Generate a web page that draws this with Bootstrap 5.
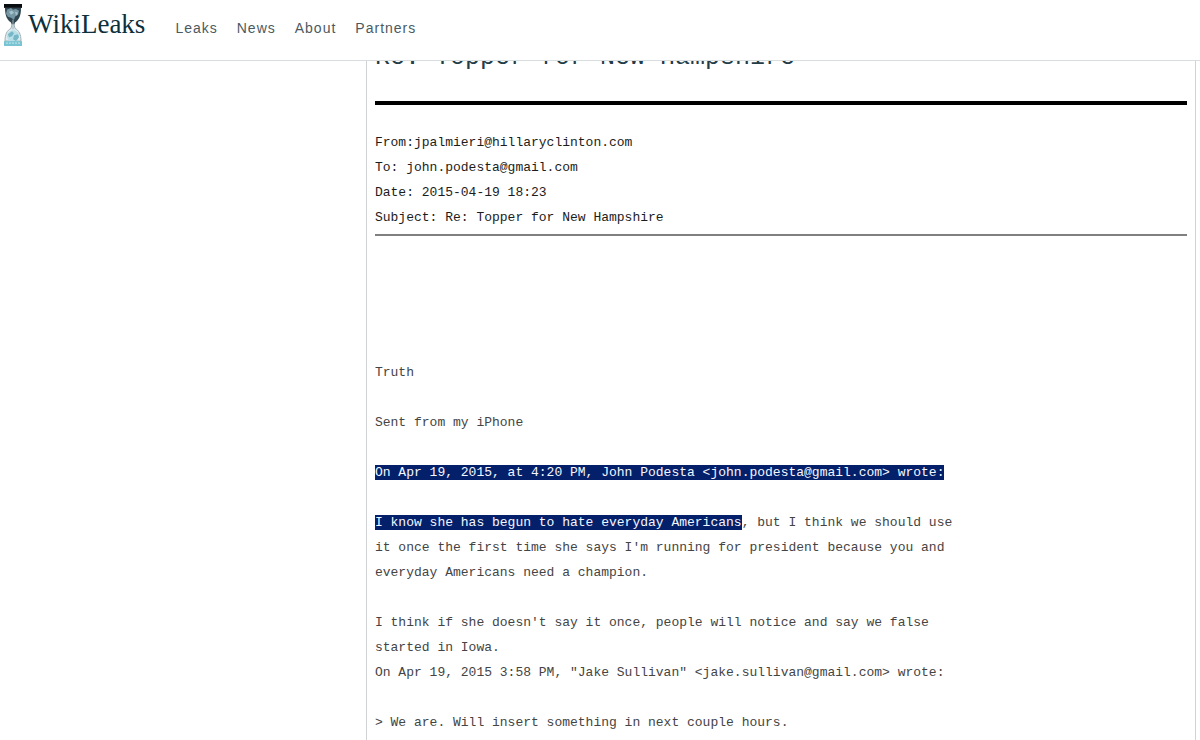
<!DOCTYPE html>
<html lang="en">
<head>
<meta charset="utf-8">
<meta name="viewport" content="width=device-width, initial-scale=1">
<title>WikiLeaks - Re: Topper for New Hampshire</title>
<link href="https://cdn.jsdelivr.net/npm/bootstrap@5.3.0/dist/css/bootstrap.min.css" rel="stylesheet">
<style>
  body { font-family: "Liberation Sans", Arial, sans-serif; background: #fff; }
  .site-bar { height: 61px; border-bottom: 1px solid #d8dedf; }
  .brand-name { font: 27px/32px "Liberation Serif", Georgia, serif; color: #0c303c; margin: 8px 0 0 6px; }
  .site-bar .nav-link { font-size: 14px; line-height: 20px; letter-spacing: 1px; color: #4b5a61; }
  .site-links { gap: 19px; margin: 18px 0 0 30px; }
  .side-space { flex: 0 0 30.6%; }
  .mail { border: solid #d0d3d5; border-width: 0 1px; padding: 43px 8px 0; font: 13px/25px "Liberation Mono", "Courier New", monospace; }
  .mail-title { font: 25px/30px "Liberation Mono", "Courier New", monospace; color: #223c48; padding-bottom: 28px; border-bottom: 4px solid #000; margin-bottom: 25px; }
  .mail-head { color: #1c1c1c; border-bottom: 2px solid #808080; padding-bottom: 4px; margin-bottom: 124px; }
  .mail-text { font: inherit; color: #444; white-space: pre-wrap; }
  .picked { background: #05206a; color: #f4f7ff; }
</style>
</head>
<body>
<header class="site-bar fixed-top bg-white d-flex align-items-start">
  <a href="#" class="d-flex align-items-start text-decoration-none ps-1" aria-label="WikiLeaks home">
    <svg class="mt-1" width="18" height="42" viewBox="0 0 18 43" preserveAspectRatio="none" aria-hidden="true">
      <path d="M0 0h18v4H0z" fill="#080d12"/>
      <path d="M1 4h16c0 8-2 12-6 15l-1 3H8l-1-3C3 16 1 12 1 4z" fill="#304650"/>
      <path d="M3 6l4-2 2 2 3-1 3 2-1 4-3 2-1 3-3-2-3-1-2-3z" fill="#7597a4"/>
      <path d="M5 8l3-1 2 2-3 2zM11 8l3 1-2 3z" fill="#a7c4cd"/>
      <path d="M8 21h2l1 4c4 2 6 6 6 13H1c0-7 2-11 6-13z" fill="#dcebef" stroke="#9dafb5"/>
      <path d="M9 16v10" stroke="#9db4bd"/>
      <circle cx="9" cy="33" r="6" fill="#b8dfe8"/>
      <path d="M4 31l4-3 2 2-2 3-3 1zM10 32l4-1 1 3-3 4-3-2z" fill="#75b6c7"/>
      <path d="M0 38h18v5H0z" fill="#79c4d3"/>
      <path d="M2 40h14" stroke="#c9ebf0" stroke-dasharray="2 1"/>
    </svg>
    <span class="brand-name">WikiLeaks</span>
  </a>
  <nav class="site-links d-flex" aria-label="Main">
    <a class="nav-link p-0" href="#">Leaks</a>
    <a class="nav-link p-0" href="#">News</a>
    <a class="nav-link p-0" href="#">About</a>
    <a class="nav-link p-0" href="#">Partners</a>
  </nav>
</header>
<main class="d-flex min-vh-100 pe-1">
  <div class="side-space"></div>
  <article class="mail flex-fill">
    <h1 class="mail-title">Re: Topper for New Hampshire</h1>
    <div class="mail-head">
      <div>From:jpalmieri@hillaryclinton.com</div>
      <div>To: john.podesta@gmail.com</div>
      <div>Date: 2015-04-19 18:23</div>
      <div>Subject: Re: Topper for New Hampshire</div>
    </div>
    <pre class="mail-text mb-0">Truth

Sent from my iPhone

<span class="picked">On Apr 19, 2015, at 4:20 PM, John Podesta &lt;john.podesta@gmail.com&gt; wrote:</span>

<span class="picked">I know she has begun to hate everyday Americans</span><span>, but I think we should use</span>
<span>it once the first time she says I'm running for president because you and
everyday Americans need a champion.</span>

I think if she doesn't say it once, people will notice and say we false
started in Iowa.
On Apr 19, 2015 3:58 PM, "Jake Sullivan" &lt;jake.sullivan@gmail.com&gt; wrote:

&gt; We are. Will insert something in next couple hours.</pre>
  </article>
</main>
<script src="https://cdn.jsdelivr.net/npm/bootstrap@5.3.0/dist/js/bootstrap.bundle.min.js"></script>
</body>
</html>
